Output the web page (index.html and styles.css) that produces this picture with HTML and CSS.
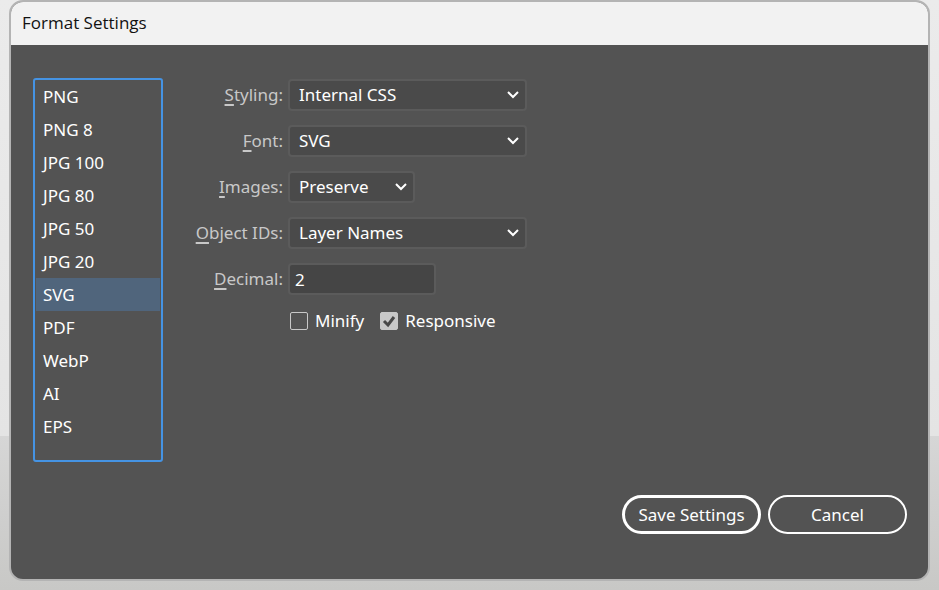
FILE: index.html
```
<!DOCTYPE html>
<html lang="en">
<head>
    <meta charset="UTF-8">
    <meta name="viewport" content="width=device-width, initial-scale=1.0">
    <title>Format Settings</title>
    <link rel="stylesheet" href="styles.css">
</head>
<body>
    <main class="dialog">
        <header class="title-bar">
            <h1>Format Settings</h1>
        </header>

        <form class="content">
            <div class="settings">
                <select class="formats" size="11" aria-label="Format">
                    <option>PNG</option>
                    <option>PNG 8</option>
                    <option>JPG 100</option>
                    <option>JPG 80</option>
                    <option>JPG 50</option>
                    <option>JPG 20</option>
                    <option selected>SVG</option>
                    <option>PDF</option>
                    <option>WebP</option>
                    <option>AI</option>
                    <option>EPS</option>
                </select>

                <div class="fields">
                    <label for="styling"><u>S</u>tyling:</label>
                    <div class="dropdown">
                        <select id="styling"><option>Internal CSS</option></select>
                        <svg class="arrow" viewBox="0 0 12 8"><path d="M1 1l5 5 5-5"/></svg>
                    </div>

                    <label for="font"><u>F</u>ont:</label>
                    <div class="dropdown">
                        <select id="font"><option>SVG</option></select>
                        <svg class="arrow" viewBox="0 0 12 8"><path d="M1 1l5 5 5-5"/></svg>
                    </div>

                    <label for="images"><u>I</u>mages:</label>
                    <div class="dropdown small">
                        <select id="images"><option>Preserve</option></select>
                        <svg class="arrow" viewBox="0 0 12 8"><path d="M1 1l5 5 5-5"/></svg>
                    </div>

                    <label for="object-ids"><u>O</u>bject IDs:</label>
                    <div class="dropdown">
                        <select id="object-ids"><option>Layer Names</option></select>
                        <svg class="arrow" viewBox="0 0 12 8"><path d="M1 1l5 5 5-5"/></svg>
                    </div>

                    <label for="decimal"><u>D</u>ecimal:</label>
                    <input type="text" id="decimal" class="input-decimal" inputmode="numeric" value="2">

                    <div class="checks">
                        <label class="check">
                            <span class="tick">
                                <input type="checkbox" id="minify">
                                <svg viewBox="0 0 18 18"><path d="M4 9l4 4 6-8"/></svg>
                            </span>
                            Minify
                        </label>
                        <label class="check">
                            <span class="tick">
                                <input type="checkbox" id="responsive" checked>
                                <svg viewBox="0 0 18 18"><path d="M4 9l4 4 6-8"/></svg>
                            </span>
                            Responsive
                        </label>
                    </div>
                </div>
            </div>

            <div class="buttons">
                <button type="button" class="primary">Save Settings</button>
                <button type="button">Cancel</button>
            </div>
        </form>
    </main>
</body>
</html>
```
FILE: styles.css
```
* {
    box-sizing: border-box;
}

body {
    margin: 0;
    padding: 0 9px 9px;
    min-height: 100vh;
    display: flex;
    background: linear-gradient(#ebebeb 0, #e4e4e4 436px, #d6d6d6 436px, #c8c8c6 100%);
    font-family: "Noto Sans", sans-serif;
    font-size: 17px;
    line-height: 24px;
    color: #fff;
}

select, input, button {
    font: inherit;
    color: inherit;
    margin: 0;
}

.dialog {
    flex: 1;
    display: flex;
    flex-direction: column;
    background-color: #535353;
    border: 2px solid #b4b4b4;
    border-radius: 14px;
    overflow: hidden;
}

.title-bar {
    height: 43px;
    padding: 0 11px 2px;
    display: flex;
    align-items: center;
    background-color: #f2f2f2;
    color: #111;
}

.title-bar h1 {
    margin: 0;
    font-family: "Open Sans", sans-serif;
    font-size: 17px;
    font-weight: 400;
}

.content {
    flex: 1;
    display: flex;
    flex-direction: column;
    justify-content: space-between;
    padding: 33px 21px 45px 22px;
}

.settings {
    display: flex;
    align-items: flex-start;
}

/* format list */

.formats {
    appearance: none;
    width: 130px;
    height: 384px;
    padding: 0 1px;
    border: 2px solid #4593e3;
    border-radius: 3px;
    background-color: #535353;
    overflow: hidden;
    outline: none;
}

.formats option {
    height: 33px;
    min-height: 33px;
    padding: 5px 7px 4px;
    line-height: 24px;
    color: #fff;
}

.formats option:checked {
    background: linear-gradient(#50657c, #50657c);
    -webkit-text-fill-color: #fff;
}

/* fields */

.fields {
    display: grid;
    grid-template-columns: 120px auto;
    column-gap: 5px;
    row-gap: 14px;
    align-items: center;
    padding-top: 1px;
}

.fields > label {
    text-align: right;
    color: #c8c8c8;
}

u {
    text-decoration-thickness: 2px;
    text-decoration-skip-ink: none;
    text-underline-offset: 3px;
}

.dropdown {
    position: relative;
    width: 239px;
}

.dropdown.small {
    width: 127px;
}

.dropdown select, .input-decimal {
    display: block;
    height: 32px;
    border: 2px solid #5b5b5b;
    border-radius: 4px;
    outline: none;
}

.dropdown select {
    appearance: none;
    width: 100%;
    padding: 0 28px 0 9px;
    background-color: #4a4a4a;
}

.arrow {
    position: absolute;
    right: 8px;
    top: 12px;
    width: 12px;
    height: 8px;
    pointer-events: none;
}

.arrow path, .tick path {
    fill: none;
    stroke: #fff;
    stroke-width: 2;
}

.input-decimal {
    width: 148px;
    padding: 0 5px;
    background-color: #454545;
}

.checks {
    grid-column: 2;
    display: flex;
    gap: 16px;
    padding-left: 2px;
}

.check {
    display: flex;
    align-items: center;
    gap: 7px;
}

.tick {
    display: grid;
}

.tick input, .tick svg {
    grid-area: 1 / 1;
    width: 18px;
    height: 18px;
}

.tick input {
    appearance: none;
    border: 1px solid #c8c8c8;
    border-radius: 2px;
}

.tick input:checked {
    background-color: #c8c8c8;
}

.tick svg {
    visibility: hidden;
    pointer-events: none;
}

.tick input:checked + svg {
    visibility: visible;
}

.tick path {
    stroke: #484848;
    stroke-width: 3;
}

/* buttons */

.buttons {
    display: flex;
    justify-content: flex-end;
    gap: 7px;
}

button {
    width: 139px;
    height: 39px;
    padding: 0;
    background: none;
    border: 2px solid #fff;
    border-radius: 20px;
}

button.primary {
    border-width: 3px;
}
```
